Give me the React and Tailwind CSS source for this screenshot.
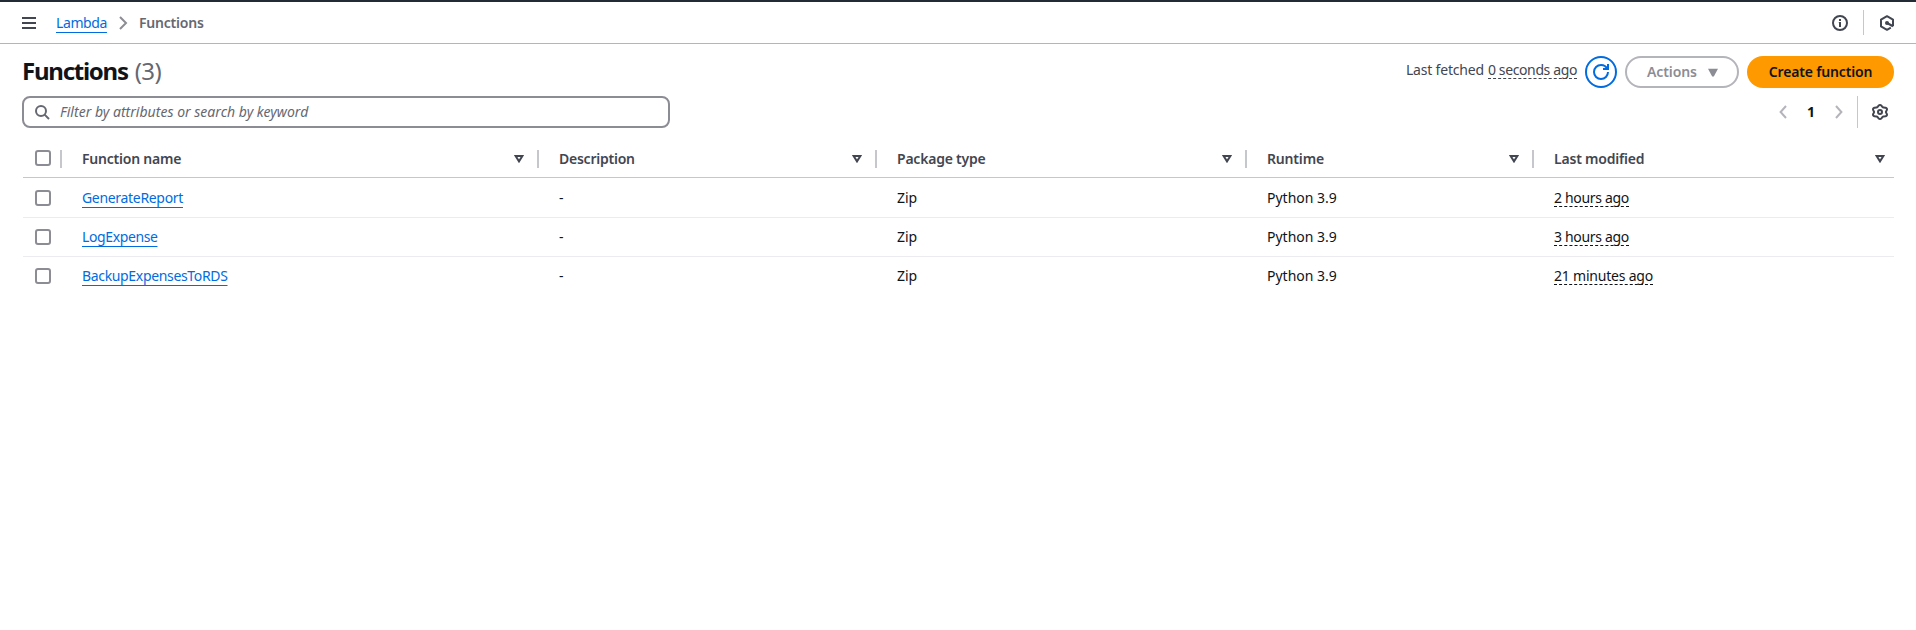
const grid = "grid grid-cols-[39px_477px_338px_370px_287px_1fr]";

const columns = [
  { label: "Function name", cls: "tracking-[-0.22px]" },
  { label: "Description", cls: "tracking-[-0.24px]" },
  { label: "Package type", cls: "tracking-[-0.22px]" },
  { label: "Runtime", cls: "tracking-[-0.17px]" },
  { label: "Last modified", cls: "tracking-[-0.2px]", last: true },
];

const functions = [
  { name: "GenerateReport", cls: "tracking-[-0.32px]", modified: "2 hours ago", mcls: "tracking-[-0.32px]", row: "h-10 pt-[10px] border-b" },
  { name: "LogExpense", cls: "tracking-[-0.39px]", modified: "3 hours ago", mcls: "tracking-[-0.32px]", row: "h-[39px] pt-[9px] border-b" },
  { name: "BackupExpensesToRDS", cls: "tracking-[-0.34px]", modified: "21 minutes ago", mcls: "tracking-[-0.21px]", row: "h-[39px] pt-[9px]" },
];

const link = "text-[#006ce0] underline decoration-1 underline-offset-4 [text-decoration-skip-ink:none]";
const dashed = "inline-block h-[19px] whitespace-nowrap border-b border-dashed align-top";

function Icon({ children, className = "" }) {
  return (
    <svg viewBox="0 0 16 16" width="16" height="16" fill="none" stroke="currentColor" strokeWidth="2" className={`shrink-0 ${className}`}>
      {children}
    </svg>
  );
}

function Checkbox() {
  return <span role="checkbox" aria-checked="false" className="block size-4 rounded-[3px] border-2 border-[#8c8c94] bg-white" />;
}

const gearPath =
  Array.from({ length: 72 }, (_, i) => {
    const a = (i * Math.PI) / 36;
    const r = 6.15 + 0.85 * Math.cos(6 * (a - Math.PI / 2));
    return `${i ? "L" : "M"}${(8 + 1.12 * r * Math.cos(a)).toFixed(2)} ${(8 + r * Math.sin(a)).toFixed(2)}`;
  }).join("") + "Z";

function TopBar() {
  return (
    <header className="flex h-[44px] items-start border-t-2 border-b border-t-[#232b37] border-b-[#b4b4bb] pr-[21px] pl-[22px]">
      <svg width="14" height="12" viewBox="0 0 14 12" className="mt-[15px] text-[#424650]" fill="currentColor">
        <path d="M0 0h14v2H0zM0 5h14v2H0zM0 10h14v2H0z" />
      </svg>
      <a className={`mt-[11px] ml-5 tracking-[-0.4px] ${link}`}>Lambda</a>
      <svg width="9" height="14" viewBox="0 0 9 14" className="mt-[14px] ml-3 text-[#8c8c94]" fill="none" stroke="currentColor" strokeWidth="2">
        <path d="M1 1l6 6-6 6" />
      </svg>
      <span className="mt-[11px] ml-[11px] font-semibold tracking-[-0.2px] text-[#656871]">Functions</span>
      <div className="mt-2 ml-auto flex h-[25px] items-center text-[#424650]">
        <Icon>
          <circle cx="8" cy="8" r="7" />
          <path d="M8 4v2M8 7v5" />
          <path d="M6.8 7.5H8" strokeWidth="1" />
        </Icon>
        <span className="ml-[15px] h-[25px] w-px bg-[#c6c6cd]" />
        <Icon className="ml-[15px]">
          <path d="M14 11.2V4.6L8 1.2 2 4.6v6.8l6 3.4 3.8-2.1" strokeLinejoin="round" />
          <path d="M8.5 8.2L14 11.2" strokeWidth="2.2" />
          <circle cx="8" cy="8" r="2" fill="currentColor" stroke="none" />
        </Icon>
      </div>
    </header>
  );
}

function TitleRow() {
  return (
    <div className="flex h-[52px] items-start pt-3 pr-[22px] pl-[22px]">
      <h1 className="text-[24px] leading-[30px] font-bold text-[#0f141a]">
        <span className="tracking-[-1.25px]">Functions</span>
        <span className="ml-[7px] font-normal tracking-[-0.6px] text-[#656871]">(3)</span>
      </h1>
      <div className="ml-auto flex items-start text-[#424650]">
        <span className="mt-1 mr-[4px] tracking-[-0.18px]">Last fetched</span>
        <span className={`mt-1 tracking-[-0.38px] border-[#424650] ${dashed}`}>0 seconds ago</span>
        <button className="ml-2 flex size-8 items-center justify-center rounded-full border-2 border-[#006ce0] text-[#006ce0]">
          <Icon>
            <path d="M10 5h5V0" />
            <path d="M15 8a7 7 0 0 1-7 7 7 7 0 0 1-7-7 7 7 0 0 1 7-7 6.9 6.9 0 0 1 6.3 4" />
          </Icon>
        </button>
        <button className="ml-2 flex h-8 w-[114px] items-center rounded-full border-2 border-[#b4b4bb] pl-5 font-semibold text-[#8c8c94]">
          <span className="tracking-[-0.1px]">Actions</span>
          <svg width="10" height="9" viewBox="0 0 10 9" className="ml-[11px]" fill="currentColor">
            <path d="M0 .8h10L5.8 8.5H4.2z" />
          </svg>
        </button>
        <button className="ml-2 flex h-8 w-[147px] items-center justify-center rounded-full bg-[#ff9900] font-semibold tracking-[-0.16px] text-[#0f141a]">
          Create function
        </button>
      </div>
    </div>
  );
}

function FilterRow() {
  return (
    <div className="flex h-8 items-center px-[22px]">
      <div className="flex h-8 w-[648px] items-center rounded-lg border-2 border-[#8c8c94] pl-[10px]">
        <Icon className="text-[#656871]">
          <circle cx="7" cy="7" r="5" />
          <path d="M10.6 10.6L15 15" />
        </Icon>
        <span className="ml-[10px] tracking-[0.02px] text-[#656871] italic">Filter by attributes or search by keyword</span>
      </div>
      <div className="ml-auto flex h-8 items-center pr-[6px] text-[#b4b4bb]">
        <svg width="8" height="14" viewBox="0 0 8 14" fill="none" stroke="currentColor" strokeWidth="2">
          <path d="M7 1L1.6 7 7 13" />
        </svg>
        <span className="w-[48px] text-center font-bold text-[#0f141a]">1</span>
        <svg width="8" height="14" viewBox="0 0 8 14" fill="none" stroke="currentColor" strokeWidth="2">
          <path d="M1 1l5.4 6L1 13" />
        </svg>
        <span className="ml-[14px] h-8 w-px bg-[#c6c6cd]" />
        <Icon className="ml-[14px] text-[#424650]">
          <path d={gearPath} />
          <circle cx="8" cy="8" r="2" />
        </Icon>
      </div>
    </div>
  );
}

function Table() {
  return (
    <div className="pr-[22px] pl-[23px]">
      <div className={`${grid} h-[50px] border-b border-[#c6c6cd] pt-[22px] text-[#424650]`}>
        <div className="flex items-start justify-between pl-3">
          <Checkbox />
          <span className="h-[18px] w-[2px] bg-[#c6c6cd]" />
        </div>
        {columns.map((c) => (
          <div key={c.label} className="flex items-start pl-5">
            <span className={`-mt-px font-semibold ${c.cls}`}>{c.label}</span>
            <svg width="10" height="8" viewBox="0 0 10 8" className={`mt-[5px] ml-auto ${c.last ? "mr-[9px]" : "mr-[13px]"}`} fill="none" stroke="currentColor" strokeWidth="2">
              <path d="M1.6 1h6.8L5 6.4z" />
            </svg>
            {!c.last && <span className="h-[18px] w-[2px] bg-[#c6c6cd]" />}
          </div>
        ))}
      </div>
      {functions.map((f) => (
        <div key={f.name} className={`${grid} ${f.row} border-[#ebebf0] text-[#0f141a]`}>
          <div className="pt-[2px] pl-3">
            <Checkbox />
          </div>
          <div className="pl-5">
            <a className={`${link} ${f.cls}`}>{f.name}</a>
          </div>
          <div className="pl-5">-</div>
          <div className="pl-5">Zip</div>
          <div className="pl-5">Python 3.9</div>
          <div className="pl-5">
            <span className={`${dashed} border-[#0f141a] ${f.mcls}`}>{f.modified}</span>
          </div>
        </div>
      ))}
    </div>
  );
}

export default function App() {
  return (
    <div className="min-h-[630px] bg-white font-['Noto_Sans','Open_Sans',sans-serif] text-[14px] leading-5">
      <TopBar />
      <TitleRow />
      <FilterRow />
      <Table />
    </div>
  );
}
